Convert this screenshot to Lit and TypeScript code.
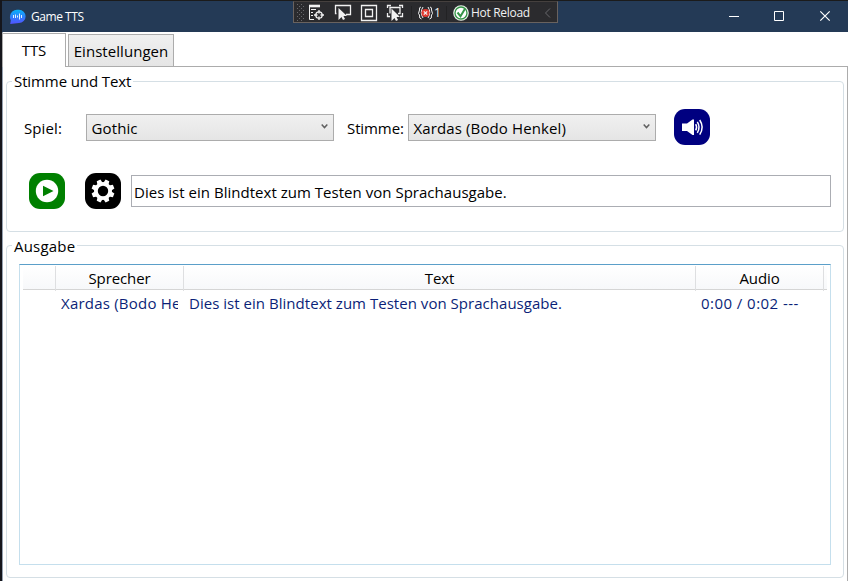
import { LitElement, html, svg, css } from "lit";
import { customElement, property } from "lit/decorators.js";

@customElement("icon-button")
class IconButton extends LitElement {
  @property() kind = "play";
  static styles = css`
    :host { display: block; width: 36px; height: 36px; flex: none; }
    .face { display: block; width: 36px; height: 36px; border-radius: 11px; }
    .play { background: #008000; }
    .gear { background: #000; }
    .sound { background: #000080; }
    svg { display: block; }
  `;
  private glyph() {
    if (this.kind === "play")
      return svg`<circle cx="18" cy="18" r="11.2" fill="#fff"/><path d="M14 12.7V23.3L24.5 18Z" fill="#008000"/>`;
    if (this.kind === "gear") {
      const teeth = [22.5, 67.5, 112.5, 157.5, 202.5, 247.5, 292.5, 337.5];
      return svg`<circle cx="18" cy="18" r="7.1" fill="none" stroke="#fff" stroke-width="3.8"/>
        ${teeth.map((a) => svg`<path d="M15.2 10.5L16 6.5H20L20.8 10.5Z" fill="#fff" transform=${`rotate(${a} 18 18)`}/>`)}`;
    }
    return svg`<path d="M8 14.5H13L18.5 10.5H20V26H18.5L13 22H8Z" fill="#fff"/>
      <path d="M21.7 15.2Q23.5 18.2 21.7 21.3M23.3 12.8Q26.8 18.2 23.3 23.8M25.7 11Q30.6 18.2 25.7 25.6" fill="none" stroke="#fff" stroke-width="1.5"/>`;
  }
  render() {
    return html`<div class="face ${this.kind}"><svg width="36" height="36" viewBox="0 0 36 36">${this.glyph()}</svg></div>`;
  }
}

@customElement("combo-box")
class ComboBox extends LitElement {
  @property() value = "";
  static styles = css`
    :host { display: block; width: 248px; height: 27px; flex: none; letter-spacing: 0.12px; }
    .box { box-sizing: border-box; height: 27px; border: 1px solid #acacac; background: linear-gradient(#f0f0f0, #e5e5e5);
      display: flex; justify-content: space-between; align-items: center; padding: 0 5px 0 4.5px; line-height: 25px; }
    .value { white-space: nowrap; padding-top: 2px; }
    svg { display: block; margin-top: -1px; }
  `;
  render() {
    return html`<div class="box"><span class="value">${this.value}</span>
      <svg width="7" height="5" viewBox="0 0 7 5"><path d="M.7 .6L3.5 3.6L6.3 .6" fill="none" stroke="#606060" stroke-width="1.5"/></svg></div>`;
  }
}

@customElement("debug-toolbar")
class DebugToolbar extends LitElement {
  static styles = css`
    :host { display: block; }
    .bar { box-sizing: border-box; width: 265px; height: 22px; border: 1px solid #69625f; border-top-color: #45403e; background: #2b2b2e;
      color: #f1f1f1; font: 12px/20px "Open Sans", sans-serif; display: flex; }
    svg { display: block; flex: none; }
    .count { width: 10px; margin-top: 1px; padding-left: 1px; box-sizing: border-box; }
    .label { width: 62px; letter-spacing: -0.3px; white-space: nowrap; margin-top: 1px; }
  `;
  render() {
    const dots = [];
    for (let y = 0; y < 5; y++) for (let x = 0; x < 2; x++)
      dots.push(svg`<path d=${`M${3 + x * 4} ${2 + y * 4}h1v1h-1zM${5 + x * 4} ${4 + y * 4}h1v1h-1z`}/>`);
    return html`<div class="bar">
      <svg width="124" height="20" viewBox="0 0 124 20" fill="none" stroke="#f1f1f1">
        <g fill="#68686c" stroke="none">${dots}</g>
        <path d="M15 4H26" stroke-width="2.6"/><path d="M15.5 3V17.5H20M17 7.5H22M17 10.5H19M17 13.5H19"/>
        <circle cx="25" cy="13" r="3.2" stroke-width="1.3"/><path d="M25 8V11.5M25 14.5V18M20 13H23.5M26.5 13H30" stroke-width="1.3"/>
        <path d="M42.5 11.5H41.5V3.5H56.5V12.5H52" stroke-width="1.3"/>
        <path d="M44.5 6V18L47.5 15L49 18L51 17L49.5 14H53Z" fill="#f1f1f1" stroke="none"/>
        <path d="M67.5 3.5H82.5V18.5H67.5ZM71.5 7.5H78.5V14.5H71.5Z" stroke-width="1.3"/>
        <path d="M97 3.5H93.5V6M105 3.5H108.5V6M93.5 11V14.5H96M108.5 11V14.5H106M96 11.5V5.5H106V11.5H104" stroke-width="1.3"/>
        <path d="M97.5 6.5V19L100.5 16L102 19L104 18L102.5 15H106Z" fill="#f1f1f1" stroke="none"/>
        <path d="M117.5 4V18" stroke="#222224"/>
      </svg>
      <svg width="15" height="20" viewBox="0 0 15 20" fill="none" stroke="#f1f1f1">
        <path d="M3 5Q1 5 1.5 8L.5 11.5L1.5 13Q1 17 3.5 17M12 5Q14 5 13.5 8L14.5 11.5L13.5 13Q14 17 11.5 17M5 5Q1.5 10.5 5 16M10 5Q13.5 10.5 10 16" stroke-width="1"/>
        <circle cx="7.5" cy="11" r="4" fill="#e23c32" stroke="none"/><path d="M5.8 9.3L9.2 12.7M9.2 9.3L5.8 12.7" stroke-width="1.2"/>
      </svg>
      <span class="count">1</span>
      <svg width="28" height="20" viewBox="0 0 28 20"><path d="M3.5 4V18" stroke="#222224"/>
        <circle cx="18" cy="11" r="7.8" fill="#e9f2e9"/><circle cx="18" cy="11" r="6" fill="#fff" stroke="#359447" stroke-width="1.3"/>
        <path d="M14.5 10.5L17.5 14.2L22 6.8" fill="none" stroke="#359447" stroke-width="2"/></svg>
      <span class="label">Hot Reload</span>
      <svg width="18" height="20" viewBox="0 0 18 20"><path d="M17 6.5L12.5 11L17 15.5" fill="none" stroke="#68686c"/></svg>
    </div>`;
  }
}

@customElement("group-box")
class GroupBox extends LitElement {
  @property() heading = "";
  static styles = css`
    :host { display: block; box-sizing: border-box; border: 1px solid #d5dfe5; border-radius: 4px; position: relative; }
    .heading { position: absolute; left: 5px; top: -12px; height: 22px; line-height: 22px; padding: 0 2px; background: #fff; white-space: nowrap; }
    :host([heading="Ausgabe"]) .heading { letter-spacing: 0.2px; top: -11px; }
  `;
  render() {
    return html`<span class="heading">${this.heading}</span><slot></slot>`;
  }
}

@customElement("app-root")
class AppRoot extends LitElement {
  static styles = css`
    :host { display: block; width: 848px; height: 581px; overflow: hidden; background: #fff; color: #000;
      font: 15px/22px "Open Sans", "Noto Sans", sans-serif; letter-spacing: -0.1px; }
    .window { box-sizing: border-box; height: 581px; display: flex; flex-direction: column; border-left: 2px solid #15161c; }
    .title { box-sizing: border-box; height: 32px; flex: none; background: #243a56; border-top: 1px solid #1b1b1b; color: #fff;
      display: flex; align-items: center; position: relative; padding-left: 7px; font-size: 12px; letter-spacing: -0.45px; }
    .name { margin-left: 5px; padding-top: 1px; flex: 1; }
    .controls { display: block; }
    .dock { position: absolute; left: 291px; top: 0; }
    .tabs { height: 34px; flex: none; display: flex; align-items: flex-end; box-sizing: border-box; border-left: 1px solid #95a1b0; }
    .tab { box-sizing: border-box; border: 1px solid #acacac; border-bottom: 0; text-align: center; white-space: nowrap; }
    .active { width: 64px; margin-left: -1px; height: 34px; background: #fff; line-height: 33px; margin-bottom: -1px; position: relative; }
    .other { width: 106px; margin-left: 2px; height: 32px; background: linear-gradient(#f0f0f0, #e5e5e5); line-height: 32px; letter-spacing: 0.05px; }
    .pane { flex: 1; min-height: 0; box-sizing: border-box; border: 1px solid #acacac; border-left-color: #95a1b0; border-bottom: 0; padding: 14px 3px 0; }
    .voice { height: 151px; }
    .output { height: 333px; margin-top: 13px; padding: 18px 12px 0; }
    .row { display: flex; align-items: center; }
    .first { padding: 27px 0 0 17px; }
    .second { padding: 28px 12px 0 22px; }
    .game { width: 62px; padding-top: 2px; letter-spacing: 0.1px; }
    .voicelabel { width: 61px; margin-left: 13px; padding-top: 2px; white-space: nowrap; }
    .speaker { margin-left: 18px; }
    .settings { margin-left: 20px; }
    .input { box-sizing: border-box; height: 32px; flex: 1; margin-left: 10px; border: 1px solid #abadb3; padding: 1px 2px 0; line-height: 30px; letter-spacing: 0.025px; }
    .list { box-sizing: border-box; width: 812px; height: 301px; border: 1px solid #c5dfed; border-top-color: #5b9fc9; padding: 1px 3px 0; }
    .head, .entry { display: grid; grid-template-columns: 33px 128px 512px 128px 1fr; }
    .head { height: 24px; box-sizing: border-box; border-bottom: 1px solid #d5d5d5; background: linear-gradient(#fff, #f7f8fa); text-align: center; line-height: 25px; }
    .cell { border-right: 1px solid #dedfe1; }
    .entry { color: #0b1f78; height: 26px; line-height: 27px; letter-spacing: 0.03px; }
    .field { padding: 0 6px 0 5px; }
    .clip { display: block; overflow: hidden; white-space: nowrap; letter-spacing: 0.22px; }
    .time { letter-spacing: 0.45px; }
  `;
  render() {
    return html`<div class="window">
      <header class="title">
        <svg width="17" height="16" viewBox="0 0 17 16"><defs><linearGradient id="g" x2="0" y2="1"><stop stop-color="#06b2fa"/><stop offset="1" stop-color="#5450ff"/></linearGradient></defs>
          <path d="M8 .8H10A6.6 6.6 0 0 1 10 14L1.2 15L1.8 11.5Q.5 9.5 1 7A7 7 0 0 1 8 .8Z" fill="url(#g)"/>
          <path d="M4.5 6V9M6.5 5.5V9M8.5 6.5V8.5M10.5 4.5V10.5M12.5 6V9" stroke="#dff2ff" stroke-width="1"/></svg>
        <span class="name">Game TTS</span>
        <svg class="controls" width="120" height="31" viewBox="0 0 120 31" fill="none" stroke="#fff"><path d="M1 15.5H11M46.5 10.5H55.5V19.5H46.5Z"/><path d="M92.3 10.3L101.7 19.7M101.7 10.3L92.3 19.7" stroke-width="1.2"/></svg>
        <debug-toolbar class="dock"></debug-toolbar>
      </header>
      <nav class="tabs"><div class="tab active">TTS</div><div class="tab other">Einstellungen</div></nav>
      <main class="pane">
        <group-box class="voice" heading="Stimme und Text">
          <div class="row first"><span class="game">Spiel:</span><combo-box value="Gothic"></combo-box>
            <span class="voicelabel">Stimme:</span><combo-box value="Xardas (Bodo Henkel)"></combo-box>
            <icon-button class="speaker" kind="sound"></icon-button></div>
          <div class="row second"><icon-button kind="play"></icon-button><icon-button class="settings" kind="gear"></icon-button>
            <div class="input">Dies ist ein Blindtext zum Testen von Sprachausgabe.</div></div>
        </group-box>
        <group-box class="output" heading="Ausgabe">
          <div class="list">
            <div class="head"><span class="cell"></span><span class="cell">Sprecher</span><span class="cell">Text</span><span class="cell">Audio</span></div>
            <div class="entry"><span></span><span class="field"><span class="clip">Xardas (Bodo Henkel)</span></span>
              <span class="field">Dies ist ein Blindtext zum Testen von Sprachausgabe.</span><span class="field time">0:00 / 0:02 ---</span></div>
          </div>
        </group-box>
      </main>
    </div>`;
  }
}
